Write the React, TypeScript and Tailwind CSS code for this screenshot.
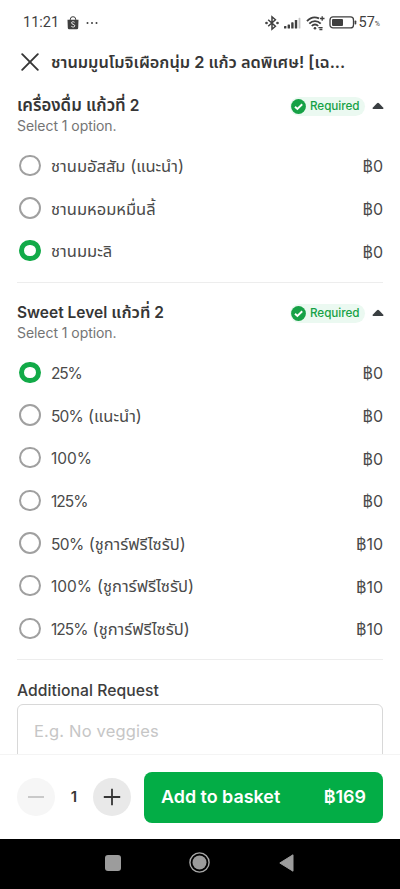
import React from "react";

type Option = { amount?: string; name?: string; price: string; selected?: boolean; tracking?: string };

const drinks: Option[] = [
  { name: "ชานมอัสสัม (แนะนำ)", price: "฿0" },
  { name: "ชานมหอมหมื่นลี้", price: "฿0" },
  { name: "ชานมมะลิ", price: "฿0", selected: true },
];

const sweetness: Option[] = [
  { amount: "25%", price: "฿0", selected: true, tracking: "tracking-[-1.2px]" },
  { amount: "50%", name: "(แนะนำ)", price: "฿0", tracking: "tracking-[-0.8px]" },
  { amount: "100%", price: "฿0", tracking: "tracking-[-0.05px]" },
  { amount: "125%", price: "฿0", tracking: "tracking-[-0.95px]" },
  { amount: "50%", name: "(ชูการ์ฟรีไซรัป)", price: "฿10", tracking: "tracking-[-0.6px]" },
  { amount: "100%", name: "(ชูการ์ฟรีไซรัป)", price: "฿10", tracking: "tracking-[-0.05px]" },
  { amount: "125%", name: "(ชูการ์ฟรีไซรัป)", price: "฿10", tracking: "tracking-[-0.95px]" },
];

function StatusBar() {
  return (
    <div className="flex h-[45px] shrink-0 items-center justify-between pl-[23px] pr-[20px] text-[#3f3f3f]">
      <div className="flex items-center">
        <span className="mt-px w-[35px] whitespace-nowrap font-['Roboto',sans-serif] text-[14.5px] leading-none">11:21</span>
        <svg className="ml-[9px]" width="12" height="14" viewBox="0 0 12 14">
          <path d="M3.3 4.2V3.2a2.7 2.5 0 0 1 5.4 0v1" fill="none" stroke="#3f3f3f" strokeWidth="1" />
          <path d="M.5 3.8h11l-.3 8.2a1.4 1.4 0 0 1-1.4 1.3H2.200a1.400 1.400 0 0 1-1.400-1.300z" fill="#3f3f3f" />
          <path d="M7.600 6.300C6.500 5.400 4.500 5.600 4.500 6.900c0 1.600 3.300 1.100 3.300 2.900 0 1.500-2.300 1.500-3.500.5" fill="none" stroke="#fff" strokeWidth=".9" />
        </svg>
        <svg className="ml-[7px]" width="12" height="4" viewBox="0 0 12 4" fill="#3f3f3f">
          <circle cx="1.500" cy="2" r="1" />
          <circle cx="6" cy="2" r="1" />
          <circle cx="10.500" cy="2" r="1" />
        </svg>
      </div>
      <div className="flex items-center">
        <svg width="14" height="16" viewBox="0 0 14 16" fill="none" stroke="#3f3f3f" strokeWidth="1.500">
          <path d="M3.200 4.700l7.200 6.500L7 14.200V1.800l3.400 3-7.200 6.500" />
          <circle cx="1.500" cy="8" r=".6" />
          <circle cx="12.500" cy="8" r=".6" />
        </svg>
        <svg className="ml-[5px]" width="17" height="12" viewBox="0 0 17 12" fill="#3f3f3f">
          <rect x="0" y="9" width="2.400" height="2.500" rx=".6" />
          <rect x="3.600" y="7.500" width="2.400" height="4" rx=".6" />
          <rect x="7.200" y="5.300" width="2.400" height="6.200" rx=".6" />
          <rect x="10.800" y="3" width="2.400" height="8.500" rx=".6" />
          <rect x="14.600" y=".8" width="1.800" height="10.700" rx=".6" fill="#c4c4c4" />
        </svg>
        <svg className="ml-[5px]" width="20" height="16" viewBox="0 0 20 16" fill="none" stroke="#3f3f3f" strokeWidth="1.800">
          <path d="M1 6.200C4.500 2.300 9 1.500 13 3.400" />
          <path d="M3.300 8.700c3.200-3.500 8.200-3.500 11.400 0" />
          <path d="M5.800 11c1.800-2 4.600-2 6.400 0" />
          <circle cx="9" cy="13.300" r="1.300" fill="#3f3f3f" stroke="none" />
          <path d="M16.200 1.200v4.600M13.900 3.500h4.600M12.400 12.700h4.200M13.400 14.500h3" strokeWidth="1.300" />
        </svg>
        <svg className="ml-[3px]" width="28" height="13" viewBox="0 0 28 13">
          <rect x="1" y=".9" width="23.500" height="11" rx="3" fill="none" stroke="#3f3f3f" strokeWidth="1.300" />
          <rect x="3" y="2.900" width="11" height="7" rx="1" fill="#3f3f3f" />
          <rect x="25.600" y="4.500" width="1.700" height="4" rx=".8" fill="#3f3f3f" />
        </svg>
        <span className="ml-[2px] mt-px font-['Roboto',sans-serif] text-[14.500px] leading-none">57</span>
        <span className="mt-[4px] font-['Roboto',sans-serif] text-[7px] leading-none">%</span>
      </div>
    </div>
  );
}

function SectionHeader({ children }: { children: React.ReactNode }) {
  return (
    <div className="h-[43px]">
      <div className="flex h-[22px] items-center justify-between">
        <h2 className="-mt-px flex items-baseline whitespace-nowrap text-[15.5px] font-semibold leading-none text-[#363636]">{children}</h2>
        <div className="flex items-center">
          <div className="flex h-[19px] w-[75px] items-center rounded-full bg-[#ebf9f1] pl-[1px] text-[#16a146]">
            <svg width="15" height="15" viewBox="0 0 15 15">
              <circle cx="7.500" cy="7.500" r="7.400" fill="#16a146" />
              <path d="M4 7.700l2.400 2.300 4.800-4.700" fill="none" stroke="#fff" strokeWidth="1.900" />
            </svg>
            <span className="ml-[4px] mt-px text-[11.7px] font-medium leading-none tracking-[-0.05px]">Required</span>
          </div>
          <svg className="-mr-px ml-[7px]" width="12" height="8" viewBox="0 0 12 8">
            <path d="M5 1.200Q6 .3 7 1.200L11.300 5.800Q11.800 7 10.800 7H1.200Q.2 7 .7 5.800Z" fill="#3a3f42" />
          </svg>
        </div>
      </div>
      <p className="-mt-px text-[14px] leading-[20px] tracking-[-0.06px] text-[#747474]">Select 1 option.</p>
    </div>
  );
}

function OptionRow({ amount, name, price, selected, tracking }: Option) {
  return (
    <div className="flex h-[42.67px] items-center text-[15.5px] text-[#4a4a4a]">
      <span
        className={
          selected
            ? "ml-[2px] size-[21.5px] rounded-full border-[5.500px] border-[#12aa48]"
            : "ml-[2px] size-[21.5px] rounded-full border-2 border-[#a0a0a0]"
        }
      />
      <span className="ml-[10.5px] mt-[2px] flex flex-1 items-baseline gap-[5px] whitespace-nowrap leading-none">
        {amount && <span className={tracking}>{amount}</span>}
        {name && <span className="text-[16.5px]">{name}</span>}
      </span>
      <span className="mt-[2px] text-[16px] leading-none">{price}</span>
    </div>
  );
}

export default function App() {
  return (
    <div className="flex h-[889px] w-[400px] flex-col overflow-hidden bg-white font-['Inter','Noto_Sans_Thai',sans-serif]">
      <StatusBar />
      <header className="flex h-[34px] shrink-0 items-center pl-[21px]">
        <svg width="18" height="18" viewBox="0 0 18 18" stroke="#363636" strokeWidth="1.900" strokeLinecap="round">
          <path d="M1.200 1.200l15.600 15.600M16.800 1.200L1.200 16.800" />
        </svg>
        <h1 className="ml-[12px] mt-px whitespace-nowrap text-[16.330px] font-semibold leading-none text-[#363636]">
          ชานมมูนโมจิเผือกนุ่ม 2 แก้ว ลดพิเศษ! [เฉ...
        </h1>
      </header>
      <main className="min-h-0 flex-1 overflow-hidden px-[17px] pt-[16px]">
        <section className="h-[188px] border-b border-[#ededed]">
          <SectionHeader>
            <span className="text-[16.800px]">เครื่องดื่ม แก้วที่</span>
            <span className="ml-[4px] text-[15.500px]">2</span>
          </SectionHeader>
          <div className="mt-[6px]">
            {drinks.map((o) => <OptionRow key={o.name} {...o} />)}
          </div>
        </section>
        <section className="h-[377px] border-b border-[#ededed] pt-[19px]">
          <SectionHeader>
            <span>Sweet Level</span>
            <span className="ml-[4px] text-[16.500px]">แก้วที่</span>
            <span className="ml-[4px] text-[15.500px]">2</span>
          </SectionHeader>
          <div className="mt-[6px]">
            {sweetness.map((o, i) => <OptionRow key={i} {...o} />)}
          </div>
        </section>
        <section className="pt-[21px]">
          <h2 className="text-[15.700px] font-medium leading-[20px] tracking-[0.05px] text-[#3d3d3d]">Additional Request</h2>
          <div className="mt-[3px] h-[80px] rounded-[6px] border-[1.500px] border-[#d8d8d8] px-[16px] pt-[15px] text-[16.500px] leading-[22px] tracking-[0.17px] text-[#c6c6c6]">
            E.g. No veggies
          </div>
        </section>
      </main>
      <footer className="flex h-[85px] shrink-0 items-center border-t border-[#f4f4f4] px-[17px]">
        <button className="flex size-[38px] items-center justify-center rounded-full bg-[#f6f6f6]">
          <span className="h-[1.500px] w-[16px] bg-[#c9c9c9]" />
        </button>
        <span className="w-[38px] text-center text-[15px] font-semibold text-[#363636]">1</span>
        <button className="flex size-[38px] items-center justify-center rounded-full bg-[#e9e9e9]">
          <svg width="18" height="18" viewBox="0 0 18 18" stroke="#363636" strokeWidth="1.800">
            <path d="M9 .8v16.400M.8 9h16.400" />
          </svg>
        </button>
        <button className="ml-[13px] flex h-[51px] flex-1 items-center justify-between rounded-[8px] bg-[#03ad46] px-[17px] text-[17.900px] font-semibold text-white">
          <span>Add to basket</span>
          <span>฿169</span>
        </button>
      </footer>
      <nav className="flex h-[50px] shrink-0 items-center bg-black pl-[105px]">
        <span className="mt-[-3px] size-[16px] rounded-[3px] bg-[#9c9c9c]" />
        <svg className="ml-[68px] mt-[-3px]" width="21" height="21" viewBox="0 0 21 21">
          <circle cx="10.500" cy="10.500" r="9.600" fill="none" stroke="#a8a8a8" strokeWidth="1.400" />
          <circle cx="10.500" cy="10.500" r="7" fill="#9c9c9c" />
        </svg>
        <svg className="ml-[69px] mt-[-3px]" width="15" height="18" viewBox="0 0 15 18">
          <path d="M14 .8v16.400L.8 9z" fill="#9c9c9c" stroke="#9c9c9c" strokeLinejoin="round" />
        </svg>
      </nav>
    </div>
  );
}
